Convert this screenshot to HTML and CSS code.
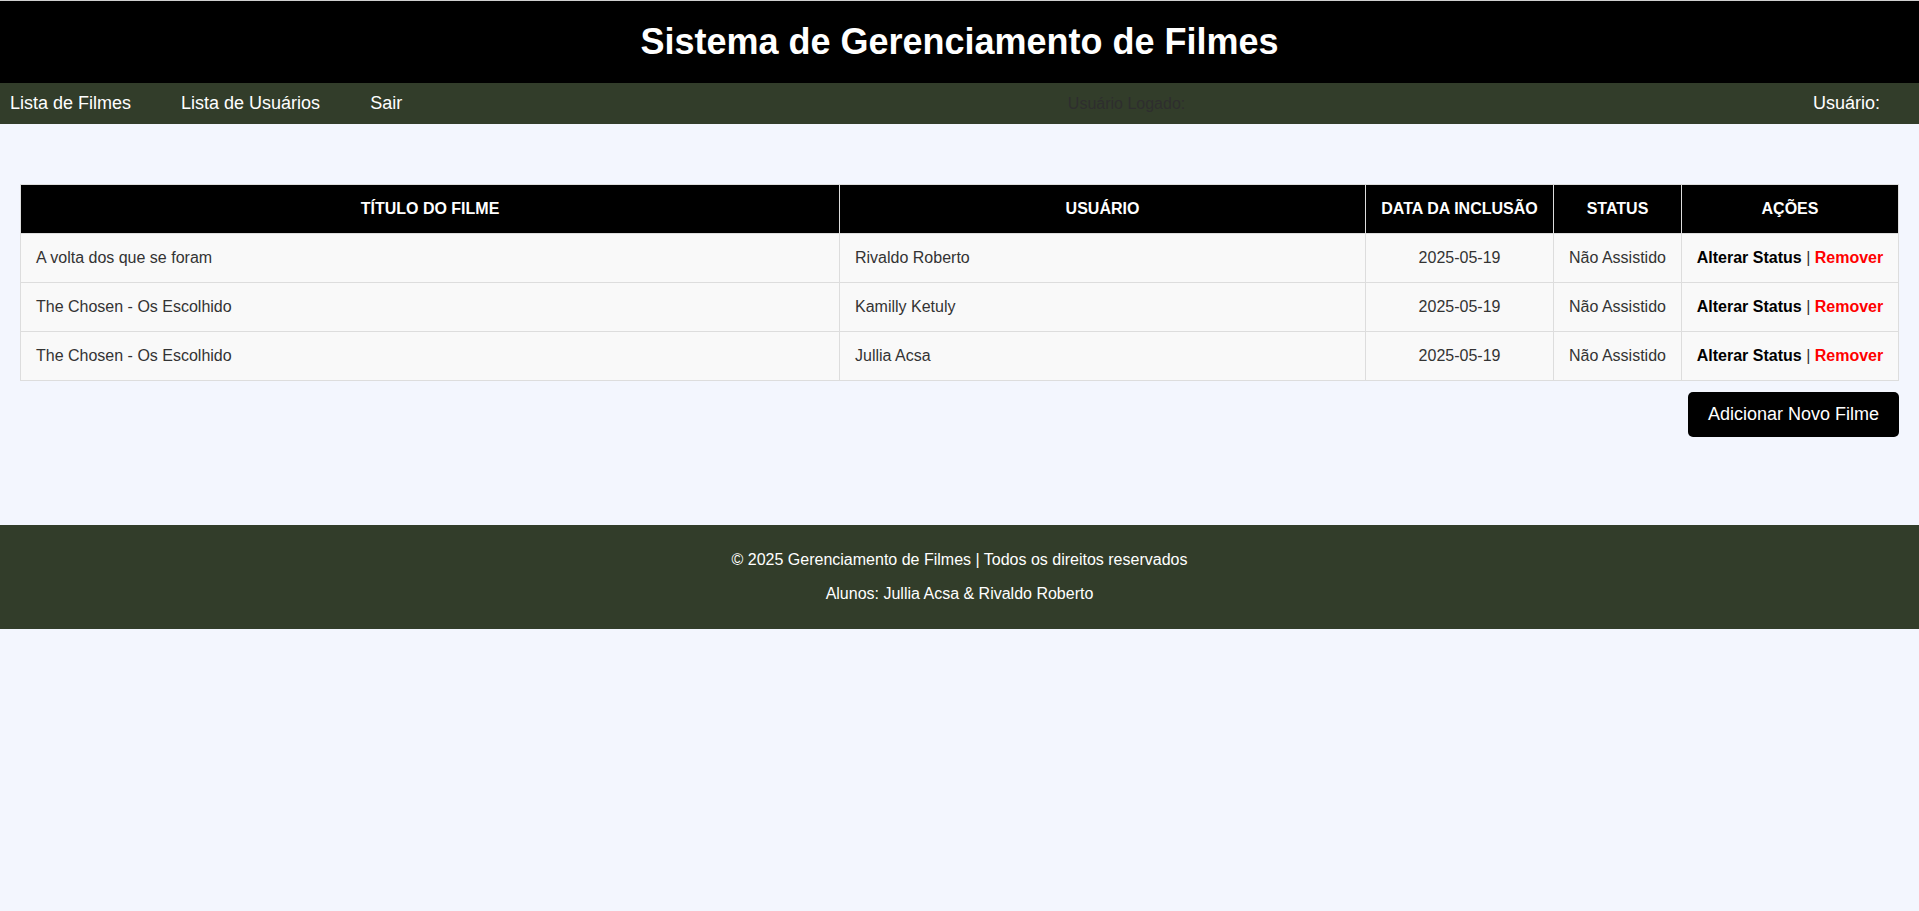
FILE: index.html
```html
<!DOCTYPE html>
<html lang="pt-BR">
<head>
<meta charset="UTF-8">
<title>Sistema de Gerenciamento de Filmes</title>
<link rel="stylesheet" href="styles.css">
</head>
<body>
<header class="site-header">
  <h1 class="site-title">Sistema de Gerenciamento de Filmes</h1>
</header>
<nav class="main-nav">
  <ul class="nav-links">
    <li><a href="#">Lista de Filmes</a></li>
    <li><a href="#">Lista de Usuários</a></li>
    <li><a href="#">Sair</a></li>
  </ul>
  <span class="logged-label">Usuário Logado:</span>
  <span class="user-label">Usuário:</span>
</nav>
<main class="content">
  <table class="movies">
    <colgroup>
      <col class="col-title">
      <col class="col-user">
      <col class="col-date">
      <col class="col-status">
      <col class="col-actions">
    </colgroup>
    <thead>
      <tr>
        <th>Título do Filme</th>
        <th>Usuário</th>
        <th>Data da Inclusão</th>
        <th>Status</th>
        <th>Ações</th>
      </tr>
    </thead>
    <tbody>
      <tr>
        <td>A volta dos que se foram</td>
        <td>Rivaldo Roberto</td>
        <td class="center">2025-05-19</td>
        <td class="center">Não Assistido</td>
        <td class="center"><a class="act-alter" href="#">Alterar Status</a> | <a class="act-remove" href="#">Remover</a></td>
      </tr>
      <tr>
        <td>The Chosen - Os Escolhido</td>
        <td>Kamilly Ketuly</td>
        <td class="center">2025-05-19</td>
        <td class="center">Não Assistido</td>
        <td class="center"><a class="act-alter" href="#">Alterar Status</a> | <a class="act-remove" href="#">Remover</a></td>
      </tr>
      <tr>
        <td>The Chosen - Os Escolhido</td>
        <td>Jullia Acsa</td>
        <td class="center">2025-05-19</td>
        <td class="center">Não Assistido</td>
        <td class="center"><a class="act-alter" href="#">Alterar Status</a> | <a class="act-remove" href="#">Remover</a></td>
      </tr>
    </tbody>
  </table>
  <div class="actions-bar">
    <a class="btn-add" href="#">Adicionar Novo Filme</a>
  </div>
</main>
<footer class="site-footer">
  <p>© 2025 Gerenciamento de Filmes | Todos os direitos reservados</p>
  <p>Alunos: Jullia Acsa &amp; Rivaldo Roberto</p>
</footer>
</body>
</html>
```
FILE: styles.css
```css
* { box-sizing: border-box; }

body {
  margin: 0;
  background: #f3f6fe;
  font-family: "Liberation Sans", Arial, sans-serif;
  color: #333;
}

.site-header {
  background: #000;
  border-top: 1px solid #cfcfcf;
  padding: 20px 0;
  text-align: center;
}

.site-title {
  margin: 0;
  font-size: 36px;
  font-weight: bold;
  color: #fff;
}

.main-nav {
  display: flex;
  align-items: center;
  justify-content: space-between;
  background: #323d2a;
  padding: 10px 39px 10px 10px;
  font-size: 18px;
}

.nav-links {
  display: flex;
  list-style: none;
  margin: 0;
  padding: 0;
}

.nav-links li { margin-right: 50px; }
.nav-links li:last-child { margin-right: 38px; }

.nav-links a {
  color: #fff;
  text-decoration: none;
}

.logged-label {
  color: #2e2e2e;
  font-size: 16px;
}

.user-label { color: #fff; }

.content {
  padding: 60px 20px 88px;
}

.movies {
  width: 100%;
  border-collapse: collapse;
  table-layout: fixed;
  font-size: 16px;
  line-height: 18px;
  background: #f9f9f9;
  border: 1px solid #ddd;
}

.col-user { width: 526px; }
.col-date { width: 188px; }
.col-status { width: 128px; }
.col-actions { width: 217px; }

.movies th {
  background: #000;
  color: #fff;
  text-transform: uppercase;
  font-weight: bold;
  padding: 15px 0;
  border: 1px solid #ddd;
  text-align: center;
  white-space: nowrap;
}

.movies td {
  padding: 15px;
  border: 1px solid #ddd;
  color: #333;
  white-space: nowrap;
}

.movies td.center { text-align: center; padding: 15px 0; }

.act-alter {
  color: #000;
  font-weight: bold;
  text-decoration: none;
}

.act-remove {
  color: #f00;
  font-weight: bold;
  text-decoration: none;
}

.actions-bar {
  display: flex;
  justify-content: flex-end;
  margin-top: 11px;
}

.btn-add {
  background: #000;
  color: #fff;
  font-size: 18px;
  padding: 12px 20px;
  border-radius: 5px;
  text-decoration: none;
}

.site-footer {
  background: #323d2a;
  color: #fff;
  text-align: center;
  padding: 10px 0;
  font-size: 16px;
}

.site-footer p { margin: 16px 0; }
```
